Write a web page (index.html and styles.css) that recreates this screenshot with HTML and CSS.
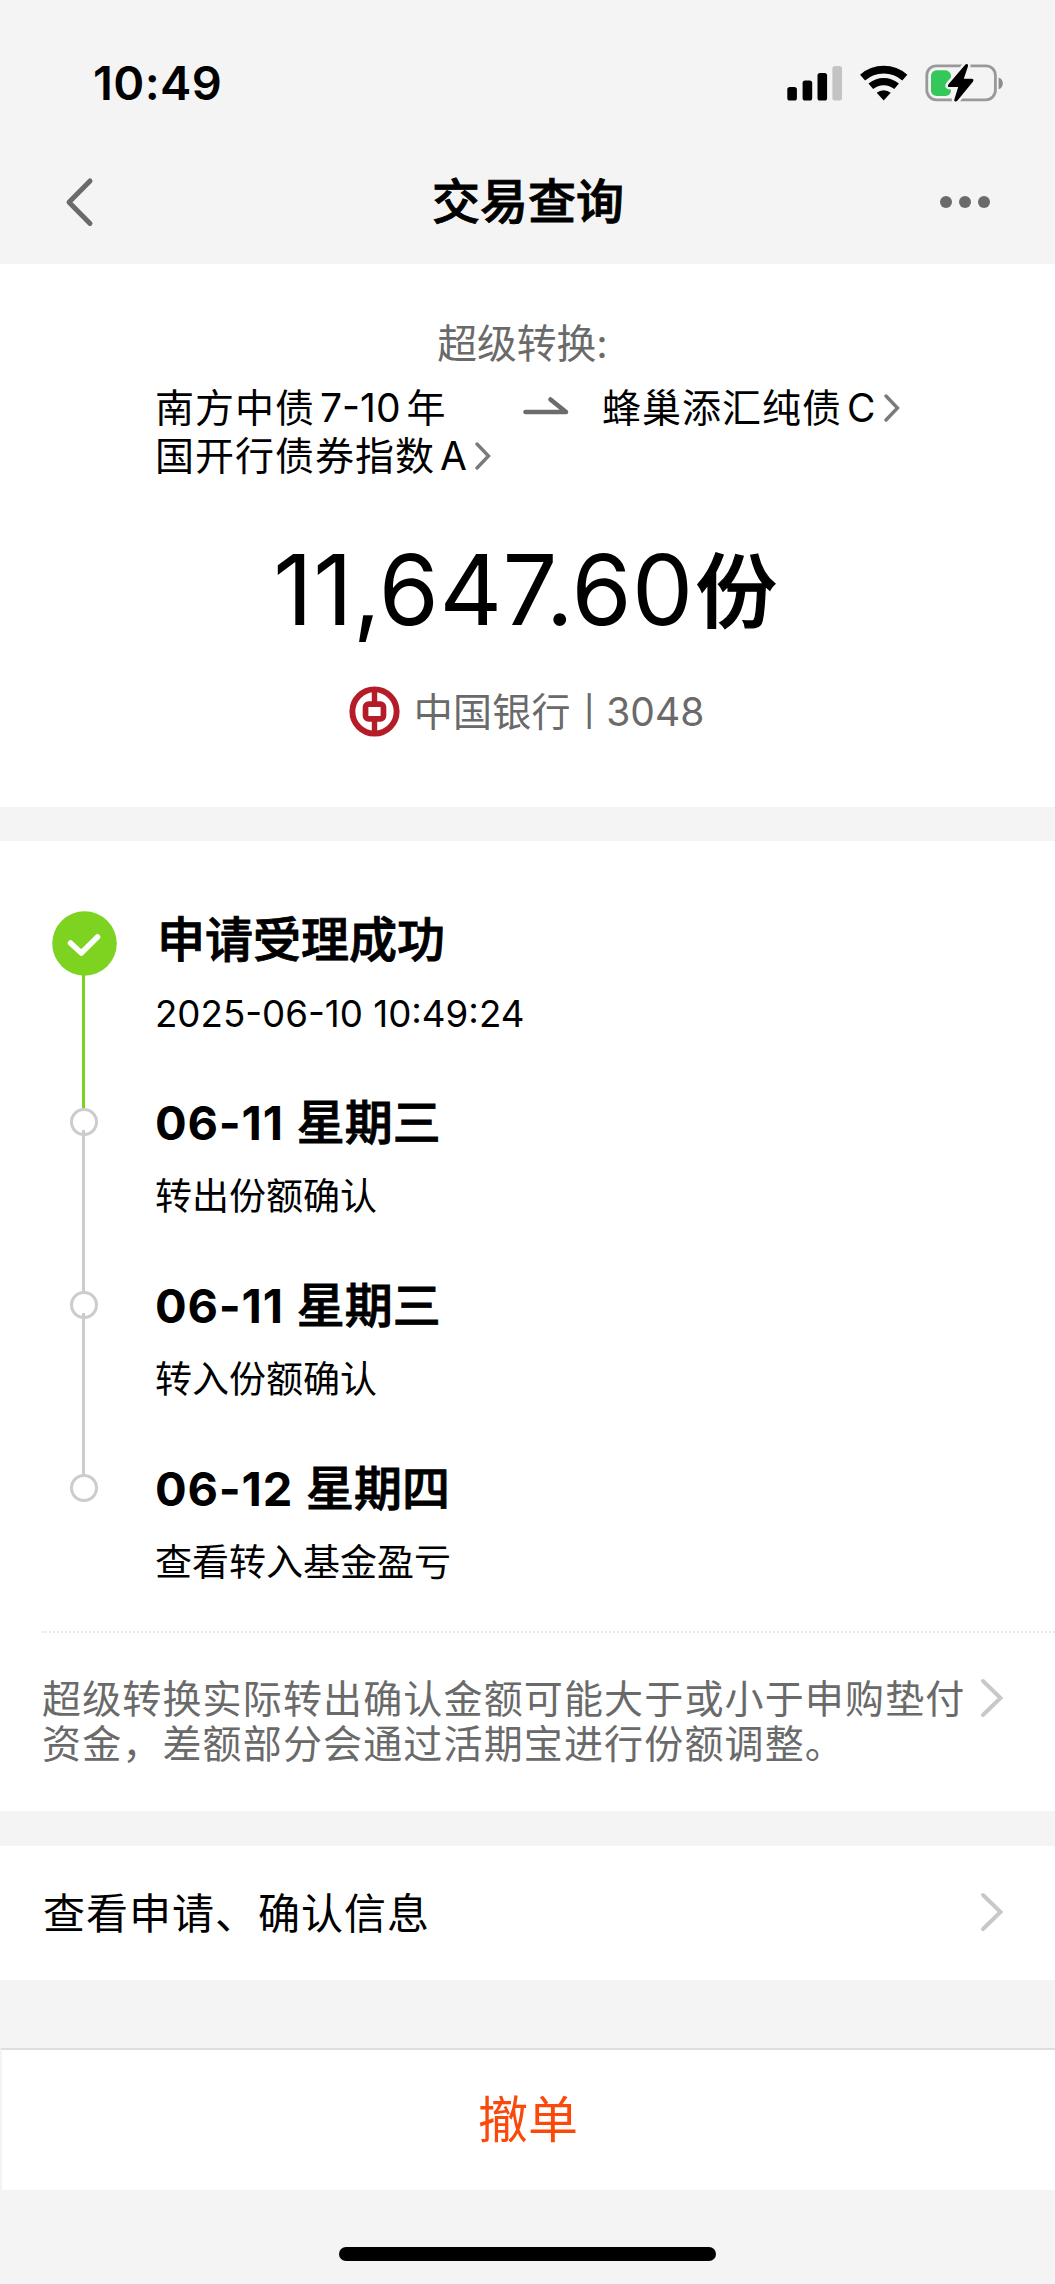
FILE: index.html
```html
<!DOCTYPE html>
<html lang="zh-CN">
<head>
<meta charset="utf-8">
<meta name="viewport" content="width=device-width, initial-scale=1">
<title>交易查询</title>
<link rel="stylesheet" href="styles.css">
</head>
<body>
<header class="top">
  <div class="status">
    <span class="clock">10:49</span>
    <svg class="signals" width="218" height="40" viewBox="0 0 218 40">
      <rect x="2.3" y="24" width="9.6" height="13.5" rx="2.6"/>
      <rect x="17.6" y="17.6" width="9.6" height="19.9" rx="2.6"/>
      <rect x="32.5" y="10" width="9.6" height="27.5" rx="2.6"/>
      <rect x="47.4" y="3" width="9.6" height="34.5" rx="2.6" fill="#c4c4c4"/>
      <g fill="none" stroke="#000">
        <path d="M77.6 14.6A32 32 0 0 1 119.8 14.6" stroke-width="7.6"/>
        <path d="M85.8 23.3A20 20 0 0 1 111.6 23.3" stroke-width="7.2"/>
      </g>
      <path d="M91.7 29.7A11 11 0 0 1 105.7 29.7L98.7 37.5Z"/>
      <rect x="141.8" y="2.8" width="68.6" height="34" rx="9.5" fill="none" stroke="#999" stroke-width="2.8"/>
      <path d="M213.6 14.500c5.6 1.8 5.6 10 0 11.800Z" fill="#8c8c8c"/>
      <rect x="146" y="7.3" width="20" height="25.6" rx="5.5" fill="#34c759"/>
      <path d="M180.400 1.600L163.500 21.200q-1.800 2.900 1.400 2.900h8.300L169.300 36.600c-.4 2.200 1.900 2.600 3 1.200L187.900 18.800q1.600-3-1.400-3h-7.700L183 3.200C183.500 1 181.700.2 180.400 1.600Z" stroke="#f4f4f4" stroke-width="5" paint-order="stroke" stroke-linejoin="round"/>
    </svg>
  </div>
  <nav class="nav">
    <svg class="back" width="30" height="52" viewBox="0 0 30 52"><path d="M26 5L5 26.200 26 47.400" fill="none" stroke="#6a6a6a" stroke-width="5" stroke-linecap="round" stroke-linejoin="round"/></svg>
    <h1 class="nav-title">交易查询</h1>
    <span class="more"><i></i><i></i><i></i></span>
  </nav>
</header>

<section class="summary">
  <p class="kind">超级转换:</p>
  <div class="funds">
    <p class="fund from">南方中债<span class="latin">7-10</span>年<br>国开行债券指数<span class="latin last">A</span><svg class="chev" width="16" height="28" viewBox="0 0 16 28"><path d="M2 2L13.500 14 2 26"/></svg></p>
    <svg class="arrow" width="46" height="20" viewBox="0 0 46 20"><path d="M2.500 16H43L27.500 3.500" fill="none" stroke="#6c6c6c" stroke-width="4.600" stroke-linecap="round" stroke-linejoin="round"/></svg>
    <p class="fund to">蜂巢添汇纯债<span class="latin last">C</span><svg class="chev" width="16" height="28" viewBox="0 0 16 28"><path d="M2 2L13.500 14 2 26"/></svg></p>
  </div>
  <p class="amount"><span class="number">11,647.60</span><span class="unit">份</span></p>
  <div class="bank">
    <svg width="51" height="51" viewBox="0 0 50 50" fill="none" stroke="#b51c27">
      <circle cx="25" cy="25" r="21.700" stroke-width="5.800"/>
      <path d="M25 4V16M25 34V46" stroke-width="5.300"/>
      <rect x="16.200" y="17.800" width="17.600" height="14.400" rx="3" stroke-width="5.600"/>
    </svg>
    <span class="bank-name">中国银行</span><span class="bank-bar">|</span><span>3048</span>
  </div>
</section>

<section class="progress">
  <ol class="steps">
    <li class="step done">
      <div class="rail"><svg class="check" width="65" height="65" viewBox="0 0 65 65"><circle cx="32.500" cy="32.500" r="32.300" fill="#7ed321"/><path d="M18.500 32L29.300 42 45.500 26" fill="none" stroke="#fff" stroke-width="5.500" stroke-linecap="round" stroke-linejoin="round"/></svg></div>
      <div class="detail"><h2>申请受理成功</h2><p class="time">2025-06-10 10:49:24</p></div>
    </li>
    <li class="step">
      <div class="rail"><span class="dot"></span></div>
      <div class="detail"><h2><b>06-11</b>星期三</h2><p>转出份额确认</p></div>
    </li>
    <li class="step">
      <div class="rail"><span class="dot"></span></div>
      <div class="detail"><h2><b>06-11</b>星期三</h2><p>转入份额确认</p></div>
    </li>
    <li class="step">
      <div class="rail"><span class="dot"></span></div>
      <div class="detail"><h2><b>06-12</b>星期四</h2><p>查看转入基金盈亏</p></div>
    </li>
  </ol>
  <div class="note">
    <p>超级转换实际转出确认金额可能大于或小于申购垫付<br>资金，差额部分会通过活期宝进行份额调整。</p>
    <svg class="go" width="24" height="40" viewBox="0 0 24 40"><path d="M3 3L20.500 20 3 37"/></svg>
  </div>
</section>

<a class="entry">
  <span>查看申请、确认信息</span>
  <svg class="go" width="24" height="40" viewBox="0 0 24 40"><path d="M3 3L20.500 20 3 37"/></svg>
</a>

<button class="cancel">撤单</button>
<div class="home"></div>
</body>
</html>
```
FILE: styles.css
```css
* { box-sizing: border-box; margin: 0; padding: 0; }
body {
  display: flex;
  flex-direction: column;
  height: 2284px;
  overflow: hidden;
  background: #f4f4f4;
  color: #000;
  font-family: Inter, "Noto Sans CJK SC", sans-serif;
}
.top { height: 264px; }
.status {
  display: flex;
  justify-content: space-between;
  align-items: center;
  height: 166px;
  padding: 0 52px 0 93px;
}
.clock { margin-top: -1px; font-size: 47px; font-weight: 600; letter-spacing: 0.400px; }
.signals { display: block; }
.nav {
  display: grid;
  grid-template-columns: 1fr auto 1fr;
  align-items: center;
  height: 72px;
  padding: 0 64px 0 65px;
}
.back { display: block; margin-left: -1px; }
.nav-title { font-size: 48px; font-weight: 500; line-height: 70px; -webkit-text-stroke: 0.900px #000; }
.more { display: flex; gap: 7px; justify-self: end; margin-right: 1px; }
.more i { width: 12px; height: 12px; border-radius: 50%; background: #6a6a6a; }

.summary {
  display: flex;
  flex-direction: column;
  align-items: center;
  height: 543px;
  background: #fff;
}
.kind { margin: 56px 10px 0 0; font-size: 39.800px; line-height: 48px; color: #6a6a6a; }
.funds {
  display: flex;
  align-items: flex-start;
  align-self: stretch;
  margin-top: 16px;
  padding-left: 155px;
}
.fund { font-size: 39px; line-height: 48px; letter-spacing: 1px; white-space: nowrap; }
.from { width: 368px; }
.latin { margin: 0 6px 0 5px; letter-spacing: 0; }
.latin.last { margin: 0 8px 0 5px; }
.chev path { fill: none; stroke: #7a7a7a; stroke-width: 3.400; stroke-linecap: round; }
.arrow { margin: 12px 33px 0 0; }
.amount { display: flex; align-items: baseline; margin: 50px 5px 0 0; line-height: 120px; }
.number { font-size: 97px; letter-spacing: 0.400px; }
.unit { margin: 0 0 2px 2px; font-size: 81px; font-weight: 500; line-height: 116px; transform: translateY(-4px); -webkit-text-stroke: 1.300px #000; }
.bank {
  display: flex;
  align-items: center;
  margin: 30px 2px 0 0;
  font-size: 39px;
  line-height: 50px;
  color: #6a6a6a;
}
.bank-name { margin-left: 14px; letter-spacing: 0.300px; }
.bank-bar { margin: -2px 12px 0 13px; font-size: 30px; font-weight: 500; }

.progress { height: 970px; margin-top: 34px; background: #fff; }
.steps { height: 790px; padding: 70px 0 0 52px; list-style: none; }
.step { display: flex; height: 183px; }
.rail {
  display: flex;
  flex-direction: column;
  align-items: center;
  width: 65px;
  margin-right: 38px;
}
.step:not(.done) .rail { padding: 14px 1px 0 0; }
.rail::after { content: ""; width: 3px; flex: 1; margin: -6px 2px -14px 0; background: #ccc; }
.step:last-child .rail::after { display: none; }
.done .rail::after { margin: -1px 3px -14px 0; background: #7ed321; }
.check { display: block; flex: none; }
.dot { width: 28px; height: 28px; flex: none; border: 3px solid #ccc; border-radius: 50%; }
.detail h2 {
  display: flex;
  margin-top: -1px;
  font-size: 48px;
  font-weight: 500;
  line-height: 60px;
  -webkit-text-stroke: 0.900px #000;
}
.done h2 { padding-left: 2px; }
.detail h2 b { margin-right: 13px; font-size: 47px; font-weight: 700; letter-spacing: 0.800px; -webkit-text-stroke: 0; }
.detail p { margin-top: 22px; font-size: 37px; line-height: 44px; }
.detail .time { font-size: 36.700px; }
.note {
  display: flex;
  justify-content: space-between;
  align-items: flex-start;
  margin-left: 42px;
  padding: 45px 51px 0 0;
  border-top: 2px dotted #e8e8e8;
}
.note p { margin-top: -2px; font-size: 39px; line-height: 45px; letter-spacing: 1.150px; color: #6a6a6a; white-space: nowrap; }
.go { display: block; flex: none; }
.go path { fill: none; stroke: #c8c8c8; stroke-width: 4; stroke-linecap: round; }

.entry {
  display: flex;
  justify-content: space-between;
  align-items: center;
  height: 134px;
  margin-top: 35px;
  padding: 0 51px 2px 43px;
  background: #fff;
  font-size: 42px;
  letter-spacing: 1px;
}
.entry span { margin-top: -4px; }
.cancel {
  height: 142px;
  margin-top: 68px;
  padding: 0 1px 9px 0;
  border: 0 solid #dedede;
  border-top-width: 2px;
  border-left: 2px solid #f4f4f4;
  background: #fff;
  color: #f94a0c;
  font: 50px "Noto Sans CJK SC", sans-serif;
}
.home { width: 377px; height: 14px; margin: 57px auto 0; border-radius: 7px; background: #000; }
```
